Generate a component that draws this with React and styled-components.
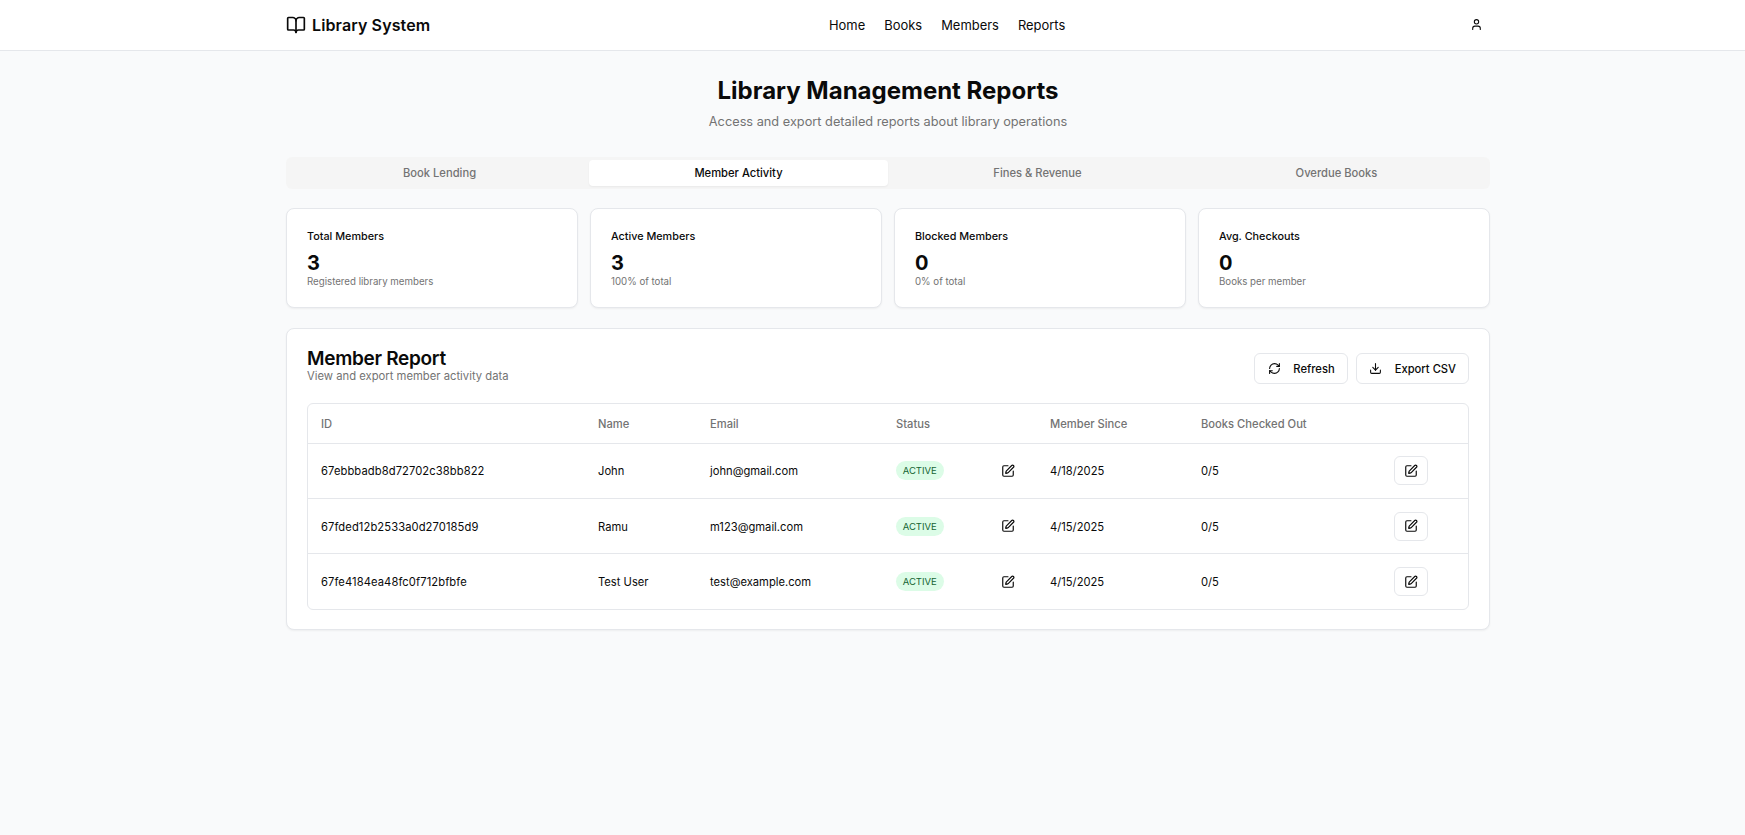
import React from "react";
import styled, { createGlobalStyle } from "styled-components";
import { BookOpen, User, RefreshCw, Download, SquarePen } from "lucide-react";

const GlobalStyle = createGlobalStyle`
  * {
    box-sizing: border-box;
  }

  html,
  body {
    margin: 0;
    background: #f9fafb;
    color: #0a0a0a;
    font-family: Inter, "Noto Sans", sans-serif;
  }
`;

const members = [
  { id: "67ebbbadb8d72702c38bb822", name: "John", email: "john@gmail.com", since: "4/18/2025" },
  { id: "67fded12b2533a0d270185d9", name: "Ramu", email: "m123@gmail.com", since: "4/15/2025" },
  { id: "67fe4184ea48fc0f712bfbfe", name: "Test User", email: "test@example.com", since: "4/15/2025" },
];

const stats = [
  { title: "Total Members", value: "3", note: "Registered library members" },
  { title: "Active Members", value: "3", note: "100% of total" },
  { title: "Blocked Members", value: "0", note: "0% of total" },
  { title: "Avg. Checkouts", value: "0", note: "Books per member" },
];

const tabs = ["Book Lending", "Member Activity", "Fines & Revenue", "Overdue Books"];

const App = () => (
  <Page>
    <GlobalStyle />
    <Header>
      <HeaderInner>
        <Logo>
          <BookOpen size={20} strokeWidth={2} />
          Library System
        </Logo>
        <Nav>
          <NavLink>Home</NavLink>
          <NavLink>Books</NavLink>
          <NavLink>Members</NavLink>
          <NavLink>Reports</NavLink>
        </Nav>
        <UserButton>
          <User size={13} strokeWidth={2} />
        </UserButton>
      </HeaderInner>
    </Header>

    <Main>
      <Title>Library Management Reports</Title>
      <Subtitle>Access and export detailed reports about library operations</Subtitle>

      <TabList>
        {tabs.map((tab, index) => (
          <Tab key={tab} $active={index === 1}>
            {tab}
          </Tab>
        ))}
      </TabList>

      <StatGrid>
        {stats.map((stat) => (
          <StatCard key={stat.title}>
            <StatTitle>{stat.title}</StatTitle>
            <StatValue>{stat.value}</StatValue>
            <StatNote>{stat.note}</StatNote>
          </StatCard>
        ))}
      </StatGrid>

      <ReportCard>
        <ReportHeader>
          <div>
            <ReportTitle>Member Report</ReportTitle>
            <ReportSub>View and export member activity data</ReportSub>
          </div>
          <Actions>
            <OutlineButton>
              <RefreshCw size={13} />
              Refresh
            </OutlineButton>
            <OutlineButton>
              <Download size={13} />
              Export CSV
            </OutlineButton>
          </Actions>
        </ReportHeader>

        <TableWrap>
          <Table>
            <colgroup>
              <col style={{ width: 277 }} />
              <col style={{ width: 112 }} />
              <col style={{ width: 186 }} />
              <col style={{ width: 154 }} />
              <col style={{ width: 151 }} />
              <col style={{ width: 193 }} />
              <col />
            </colgroup>
            <thead>
              <tr>
                <Th>ID</Th>
                <Th>Name</Th>
                <Th>Email</Th>
                <Th>Status</Th>
                <Th>Member Since</Th>
                <Th>Books Checked Out</Th>
                <Th />
              </tr>
            </thead>
            <tbody>
              {members.map((member) => (
                <Row key={member.id}>
                  <IdCell>{member.id}</IdCell>
                  <Td>{member.name}</Td>
                  <Td>{member.email}</Td>
                  <ControlCell>
                    <StatusCell>
                      <Badge>ACTIVE</Badge>
                      <GhostIcon>
                        <SquarePen size={14} />
                      </GhostIcon>
                    </StatusCell>
                  </ControlCell>
                  <Td>{member.since}</Td>
                  <Td>0/5</Td>
                  <ControlCell>
                    <IconButton>
                      <SquarePen size={14} />
                    </IconButton>
                  </ControlCell>
                </Row>
              ))}
            </tbody>
          </Table>
        </TableWrap>
      </ReportCard>
    </Main>
  </Page>
);

const Page = styled.div`
  min-height: 835px;
  background: #f9fafb;
`;

const Header = styled.header`
  height: 51px;
  background: #fff;
  border-bottom: 1px solid #e5e7eb;
`;

const HeaderInner = styled.div`
  display: grid;
  grid-template-columns: 543px auto 1fr;
  align-items: center;
  width: 1204px;
  height: 49px;
  margin-left: 286px;
`;

const Logo = styled.div`
  display: flex;
  align-items: center;
  gap: 6px;
  font-size: 16px;
  font-weight: 600;
  letter-spacing: 0.12px;
`;

const Nav = styled.nav`
  display: flex;
  gap: 19px;
`;

const NavLink = styled.a`
  font-size: 12.95px;
  font-weight: 400;
  color: #0a0a0a;
`;

const UserButton = styled.div`
  display: flex;
  justify-content: flex-end;
  padding-right: 7px;
`;

const Main = styled.main`
  width: 1204px;
  margin-left: 286px;
  padding-top: 25px;
`;

const Title = styled.h1`
  margin: 0;
  font-size: 24px;
  line-height: 30px;
  font-weight: 700;
  text-align: center;
`;

const Subtitle = styled.p`
  margin: 8px 0 0;
  font-size: 12.75px;
  line-height: 16px;
  color: #737373;
  text-align: center;
`;

const TabList = styled.div`
  display: grid;
  grid-template-columns: repeat(4, 1fr);
  height: 32px;
  margin-top: 27px;
  padding: 3px 4px;
  background: #f5f5f5;
  border-radius: 6px;
`;

const Tab = styled.div`
  display: flex;
  align-items: center;
  justify-content: center;
  font-size: 11.2px;
  font-weight: 500;
  border-radius: 4px;
  color: ${(p) => (p.$active ? "#0a0a0a" : "#737373")};
  background: ${(p) => (p.$active ? "#fff" : "transparent")};
  box-shadow: ${(p) => (p.$active ? "0 1px 2px rgba(0,0,0,.05)" : "none")};
`;

const StatGrid = styled.div`
  display: grid;
  grid-template-columns: repeat(4, 1fr);
  gap: 12px;
  margin-top: 19px;
`;

const StatCard = styled.div`
  height: 100px;
  padding: 21px 20px 20px;
  background: #fff;
  border: 1px solid #e5e7eb;
  border-radius: 8px;
  box-shadow: 0 1px 2px rgba(0, 0, 0, 0.05);
`;

const StatTitle = styled.div`
  font-size: 10.8px;
  line-height: 14px;
  font-weight: 500;
`;

const StatValue = styled.div`
  margin-top: 6px;
  font-size: 20px;
  line-height: 26px;
  font-weight: 700;
`;

const StatNote = styled.div`
  font-size: 9.7px;
  line-height: 12px;
  color: #737373;
`;

const ReportCard = styled.section`
  height: 302px;
  margin-top: 20px;
  padding: 20px;
  background: #fff;
  border: 1px solid #e5e7eb;
  border-radius: 8px;
  box-shadow: 0 1px 2px rgba(0, 0, 0, 0.05);
`;

const ReportHeader = styled.div`
  display: flex;
  align-items: flex-start;
  justify-content: space-between;
  height: 54px;
`;

const ReportTitle = styled.h2`
  margin: 0 0 1px;
  font-size: 19px;
  line-height: 19px;
  font-weight: 600;
  letter-spacing: -0.3px;
`;

const ReportSub = styled.p`
  margin: 0;
  font-size: 11.25px;
  line-height: 14px;
  color: #737373;
`;

const Actions = styled.div`
  display: flex;
  gap: 8px;
  margin-top: 4px;
`;

const OutlineButton = styled.button`
  display: flex;
  align-items: center;
  gap: 12.5px;
  height: 31px;
  padding: 0 12px 0 12.5px;
  background: #fff;
  border: 1px solid #e5e7eb;
  border-radius: 6px;
  font: 500 11.2px Inter, sans-serif;
  color: #0a0a0a;
`;

const TableWrap = styled.div`
  border: 1px solid #e5e7eb;
  border-radius: 6px;
  overflow: hidden;
`;

const Table = styled.table`
  width: 100%;
  table-layout: fixed;
  border-collapse: collapse;
`;

const Th = styled.th`
  height: 39px;
  padding: 2px 13px 0;
  text-align: left;
  font-size: 11.2px;
  font-weight: 500;
  color: #737373;
`;

const Row = styled.tr`
  height: 55.4px;
  border-top: 1px solid #e5e7eb;
`;

const Td = styled.td`
  padding: 1px 13px 0;
  font-size: 11.2px;
  color: #0a0a0a;
`;

const IdCell = styled(Td)`
  letter-spacing: 0.09px;
`;

const ControlCell = styled(Td)`
  padding-top: 0;
`;

const StatusCell = styled.div`
  display: flex;
  align-items: center;
  gap: 57px;
`;

const Badge = styled.span`
  display: inline-flex;
  align-items: center;
  height: 19px;
  padding: 0 6.7px;
  border-radius: 999px;
  background: #dcfce7;
  color: #166534;
  font-size: 9.5px;
  font-weight: 400;
`;

const GhostIcon = styled.span`
  display: flex;
  color: #0a0a0a;
`;

const IconButton = styled.button`
  display: flex;
  align-items: center;
  justify-content: center;
  width: 34px;
  height: 29px;
  padding: 0;
  background: #fff;
  border: 1px solid #e5e7eb;
  border-radius: 6px;
  color: #0a0a0a;
`;

export default App;
